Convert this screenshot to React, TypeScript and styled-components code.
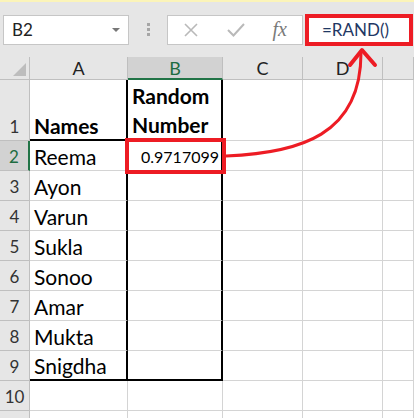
import React from 'react'
import styled, {createGlobalStyle} from 'styled-components';

const GlobalStyle = createGlobalStyle`
body {
  margin: 0;
  background: #fff;
  font-family: Lato, "Liberation Sans", sans-serif;
}
`

const names = ['Reema', 'Ayon', 'Varun', 'Sukla', 'Sonoo', 'Amar', 'Mukta', 'Snigdha'];
const columns = ['A', 'B', 'C', 'D', ''];

const App = () => {
  return (
    <Page>
      <GlobalStyle/>
      <Toolbar>
        <NameBox>
          <span>B2</span>
          <Caret/>
        </NameBox>
        <Grip>
          <i/><i/><i/>
        </Grip>
        <Buttons>
          <svg width="16" height="16" viewBox="0 0 16 16">
            <path d="M2 2 L14 14 M14 2 L2 14" stroke="#b9b9b9" strokeWidth="1.6" fill="none"/>
          </svg>
          <svg width="18" height="16" viewBox="0 0 18 16">
            <path d="M1 8 L6.5 13.5 L17 2" stroke="#b9b9b9" strokeWidth="2" fill="none"/>
          </svg>
          <Fx>fx</Fx>
        </Buttons>
        <FormulaInput>=RAND()</FormulaInput>
      </Toolbar>

      <Sheet>
        <Corner><CornerTriangle/></Corner>
        {columns.map((c) => (
          <ColHeader key={c || 'e'} selected={c === 'B'}>{c}</ColHeader>
        ))}

        <RowHeader>1</RowHeader>
        <Cell bold thickRight thickBottom>Names</Cell>
        <Cell bold thickRight>
          <Stacked>Random<br/>Number</Stacked>
        </Cell>
        <Cell/>
        <Cell/>
        <Cell/>

        {names.map((name, i) => {
          const row = i + 2;
          const last = row === 9;
          return (
            <React.Fragment key={name}>
              <RowHeader selected={row === 2}>{row}</RowHeader>
              <Cell thickRight thickBottom={last}>{name}</Cell>
              <Cell thickRight thickBottom={last} highlight={row === 2} number>
                {row === 2 ? '0.9717099' : ''}
              </Cell>
              <Cell/>
              <Cell/>
              <Cell/>
            </React.Fragment>
          )
        })}

        <RowHeader>10</RowHeader>
        <Cell/><Cell/><Cell/><Cell/><Cell/>
        <RowHeader/>
        <Cell/><Cell/><Cell/><Cell/><Cell/>
      </Sheet>

      <Annotation width="414" height="418" viewBox="0 0 414 418">
        <path d="M226 156 C 300 153, 361 135, 361 53" stroke="#ed1c24" strokeWidth="3" fill="none"/>
        <path d="M350 65 L362 50 L375 65" stroke="#ed1c24" strokeWidth="4" fill="none" strokeLinecap="round" strokeLinejoin="round"/>
      </Annotation>
    </Page>
  )
}

export default App

const Page = styled.div`
position: relative;
width: 414px;
height: 418px;
overflow: hidden;
`

const Toolbar = styled.div`
height: 55px;
border-top: 2px solid #fbf4b9;
background: #e6e6e6;
display: flex;
align-items: center;
box-sizing: content-box;
`

const NameBox = styled.div`
margin-left: 3px;
width: 126px;
height: 30px;
box-sizing: border-box;
background: #fff;
border: 1px solid #c6c6c6;
display: flex;
align-items: center;
justify-content: space-between;
padding: 0 8px 0 8px;
font-size: 17px;
color: #222;
`

const Caret = styled.div`
width: 0;
height: 0;
border-left: 4px solid transparent;
border-right: 4px solid transparent;
border-top: 4px solid #777;
`

const Grip = styled.div`
width: 38px;
display: flex;
flex-direction: column;
align-items: center;
gap: 2px;
i {
  width: 3px;
  height: 3px;
  background: #a6a6a6;
}
`

const Buttons = styled.div`
width: 136px;
height: 30px;
box-sizing: border-box;
background: #fff;
border: 1px solid #c6c6c6;
display: flex;
align-items: center;
justify-content: space-between;
padding: 0 15px 0 15px;
`

const Fx = styled.span`
font-family: "Liberation Serif", serif;
font-style: italic;
font-size: 20px;
color: #7a7a7a;
`

const FormulaInput = styled.div`
margin-left: 2px;
flex: 1;
height: 32px;
margin-right: 1px;
box-sizing: border-box;
background: #fff;
border: 4px solid #ed1c24;
padding-left: 13px;
display: flex;
align-items: center;
font-size: 17px;
color: #1f3864;
`

const Sheet = styled.div`
display: grid;
grid-template-columns: 30px 98px 95px 80px 80px 31px;
grid-template-rows: 23px 61px repeat(10, 30px);
`

const Corner = styled.div`
background: #e6e6e6;
border-right: 1px solid #bfbfbf;
border-bottom: 1px solid #bfbfbf;
display: flex;
align-items: flex-end;
justify-content: flex-end;
padding: 0 3px 3px 0;
`

const CornerTriangle = styled.div`
width: 0;
height: 0;
border-left: 13px solid transparent;
border-bottom: 13px solid #bdbdbd;
`

const ColHeader = styled.div<{selected?: boolean}>`
background: ${p => p.selected ? '#d2d2d2' : '#e6e6e6'};
border-right: 1px solid #bfbfbf;
border-bottom: ${p => p.selected ? '2px solid #217346' : '1px solid #bfbfbf'};
color: ${p => p.selected ? '#1e6c41' : '#222'};
display: flex;
align-items: center;
justify-content: center;
font-size: 18px;
`

const RowHeader = styled.div<{selected?: boolean}>`
background: ${p => p.selected ? '#d2d2d2' : '#e6e6e6'};
border-right: ${p => p.selected ? '2px solid #217346' : '1px solid #bfbfbf'};
border-bottom: 1px solid #bfbfbf;
color: ${p => p.selected ? '#1e6c41' : '#333'};
display: flex;
align-items: flex-end;
justify-content: center;
padding-bottom: 3px;
font-size: 17px;
`

const Cell = styled.div<{
  bold?: boolean;
  thickRight?: boolean;
  thickBottom?: boolean;
  highlight?: boolean;
  number?: boolean;
}>`
position: relative;
border-right: ${p => p.thickRight ? '2px solid #000' : '1px solid #d4d4d4'};
border-bottom: ${p => p.thickBottom ? '2px solid #000' : '1px solid #d4d4d4'};
display: flex;
align-items: flex-end;
justify-content: ${p => p.number ? 'flex-end' : 'flex-start'};
padding: 0 ${p => p.number ? '2px' : '0'} 1px ${p => p.number ? '0' : '4px'};
font-size: ${p => p.number ? '16px' : '21px'};
font-weight: ${p => p.bold ? 700 : 400};
color: #000;
white-space: nowrap;
${p => p.highlight && `
  outline: 4px solid #ed1c24;
  outline-offset: -1px;
  z-index: 1;
  padding-bottom: 4px;
`}
`

const Stacked = styled.div`
line-height: 29px;
`

const Annotation = styled.svg`
position: absolute;
left: 0;
top: 0;
pointer-events: none;
z-index: 2;
`
